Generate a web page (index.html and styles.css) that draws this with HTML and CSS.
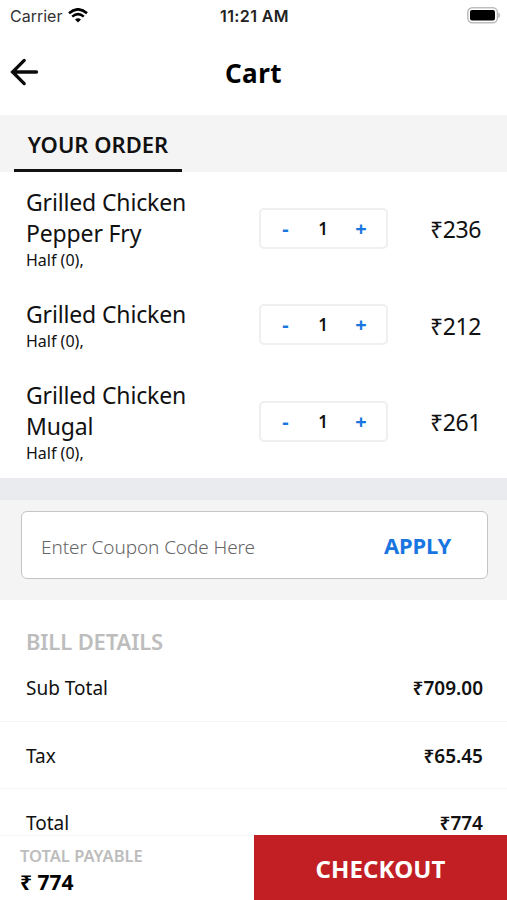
FILE: index.html
```html
<!DOCTYPE html>
<html lang="en">
<head>
  <meta charset="UTF-8" />
  <meta name="viewport" content="width=device-width, initial-scale=1.0" />
  <title>Cart</title>
  <link rel="stylesheet" href="styles.css">
</head>
<body>
  <div class="screen">
    <div class="status-bar">
      <div class="carrier">
        <span>Carrier</span>
        <svg class="wifi" width="20" height="15" viewBox="0 0 20 15">
          <path d="M1 5.2 Q10 -2.6 19 5.2" fill="none" stroke="#000" stroke-width="2.6" />
          <path d="M4.2 8.6 Q10 3.6 15.8 8.6" fill="none" stroke="#000" stroke-width="2.5" />
          <path d="M7 11.5 Q10 8.9 13 11.5 L10 14.6 Z" fill="#000" />
        </svg>
      </div>
      <div class="time">11:21 AM</div>
      <svg class="battery" width="34" height="17" viewBox="0 0 34 17">
        <rect x="0.8" y="0.8" width="29.6" height="15" rx="4.5" fill="#fff" stroke="#bdbdbd" stroke-width="1.5" />
        <rect x="3" y="3" width="25" height="10.6" rx="2" fill="#000" />
        <path d="M31.8 6 Q33.6 8.3 31.8 10.6 Z" fill="#bdbdbd" stroke="#bdbdbd" />
      </svg>
    </div>

    <div class="header">
      <svg class="back" width="29" height="28" viewBox="0 0 29 28">
        <path d="M26.5 14 H2.5 M14.2 2.4 L2.6 14 L14.2 25.6" fill="none" stroke="#0b0b0b" stroke-width="3.3" stroke-linecap="round" />
      </svg>
      <h1>Cart</h1>
    </div>

    <div class="tabs">
      <div class="tab">YOUR ORDER</div>
    </div>

    <div class="items">
      <div class="item">
        <div class="item-info">
          <div class="item-name">Grilled Chicken Pepper Fry</div>
          <div class="item-option">Half (0),</div>
        </div>
        <div class="counter">
          <span class="minus">-</span>
          <span class="count">1</span>
          <span class="plus">+</span>
        </div>
        <div class="price">₹236</div>
      </div>
      <div class="item">
        <div class="item-info">
          <div class="item-name">Grilled Chicken</div>
          <div class="item-option">Half (0),</div>
        </div>
        <div class="counter">
          <span class="minus">-</span>
          <span class="count">1</span>
          <span class="plus">+</span>
        </div>
        <div class="price">₹212</div>
      </div>
      <div class="item">
        <div class="item-info">
          <div class="item-name">Grilled Chicken Mugal</div>
          <div class="item-option">Half (0),</div>
        </div>
        <div class="counter">
          <span class="minus">-</span>
          <span class="count">1</span>
          <span class="plus">+</span>
        </div>
        <div class="price">₹261</div>
      </div>
    </div>

    <div class="divider"></div>

    <div class="coupon">
      <div class="coupon-box">
        <input type="text" class="coupon-input" placeholder="Enter Coupon Code Here" />
        <button class="apply-btn">APPLY</button>
      </div>
    </div>

    <div class="bill">
      <h2>BILL DETAILS</h2>
      <div class="bill-row first">
        <span>Sub Total</span>
        <span class="amount">₹709.00</span>
      </div>
      <div class="bill-row">
        <span>Tax</span>
        <span class="amount">₹65.45</span>
      </div>
      <div class="bill-row last">
        <span>Total</span>
        <span class="amount">₹774</span>
      </div>
    </div>

    <div class="footer">
      <div class="payable">
        <div class="payable-label">TOTAL PAYABLE</div>
        <div class="payable-amount">₹ 774</div>
      </div>
      <button class="checkout-btn">CHECKOUT</button>
    </div>
  </div>
</body>
</html>
```

FILE: styles.css
```css
* {
  box-sizing: border-box;
}

body {
  margin: 0;
  font-family: "Noto Sans", "Open Sans", sans-serif;
  background-color: #fff;
  color: #111;
}

.screen {
  height: 900px;
  display: flex;
  flex-direction: column;
  overflow: hidden;
}

/* Status bar */
.status-bar {
  flex: none;
  height: 31px;
  padding: 0 6px 0 8px;
  display: grid;
  grid-template-columns: 1fr auto 1fr;
  align-items: center;
  font-family: Inter, sans-serif;
  font-size: 16px;
}

.carrier {
  padding-left: 2px;
  display: flex;
  align-items: center;
  gap: 6px;
  color: #333;
}

.time {
  font-weight: 600;
  letter-spacing: 0.4px;
  color: #222;
}

.battery {
  justify-self: end;
}

/* Header */
.header {
  flex: none;
  height: 84px;
  padding: 0 10px 2px;
  display: grid;
  grid-template-columns: 29px 1fr 29px;
  align-items: center;
}

.header h1 {
  margin: 0;
  padding-top: 2px;
  text-align: center;
  font-size: 26px;
  font-weight: 700;
  letter-spacing: 0.5px;
  color: #000;
}

/* Tabs */
.tabs {
  flex: none;
  height: 57px;
  padding-left: 14px;
  background-color: #f4f4f4;
  display: flex;
}

.tab {
  width: 168px;
  border-bottom: 3px solid #111;
  text-align: center;
  font-size: 22px;
  font-weight: 600;
  line-height: 59px;
}

/* Order items */
.items {
  flex: none;
  padding-top: 1px;
}

.item {
  padding: 14px 26px;
  display: flex;
  align-items: center;
}

.item-info {
  width: 233px;
  padding-right: 50px;
}

.item-name {
  font-size: 23px;
  line-height: 31px;
  letter-spacing: -0.15px;
}

.item-option {
  font-size: 16px;
  line-height: 22px;
}

.counter {
  width: 129px;
  height: 41px;
  margin-bottom: 2px;
  border: 2px solid #efefef;
  border-radius: 5px;
  display: grid;
  grid-template-columns: 49px 26px 50px;
  align-items: center;
  text-align: center;
  font-size: 17px;
  font-weight: 600;
}

.minus,
.plus {
  font-size: 20px;
  font-weight: 700;
  color: #1976e0;
}

.price {
  margin-left: auto;
  font-size: 23px;
  letter-spacing: -0.4px;
}

.divider {
  flex: none;
  height: 22px;
  background-color: #e9ebee;
}

/* Coupon */
.coupon {
  flex: none;
  height: 100px;
  padding: 11px 19px 21px 21px;
  background-color: #f4f4f4;
}

.coupon-box {
  height: 68px;
  padding: 0 36px 0 19px;
  background-color: #fff;
  border: 1.5px solid #c4c4c4;
  border-radius: 6px;
  display: flex;
  align-items: center;
}

.coupon-input {
  flex: 1;
  min-width: 0;
  padding: 3px 0 0;
  border: none;
  outline: none;
  background: none;
  font-family: inherit;
  font-size: 19px;
  font-weight: 300;
  letter-spacing: -0.1px;
}

.coupon-input::placeholder {
  color: #666;
}

.apply-btn {
  padding: 0;
  border: none;
  background: none;
  font-family: inherit;
  font-size: 22px;
  font-weight: 700;
  letter-spacing: -0.2px;
  color: #1976e0;
}

/* Bill */
.bill {
  flex: 1;
  min-height: 0;
  overflow: hidden;
}

.bill h2 {
  margin: 0;
  padding: 26px 26px 0;
  font-size: 22px;
  font-weight: 600;
  line-height: 30px;
  letter-spacing: -0.15px;
  color: #bdbdbd;
}

.bill-row {
  height: 67px;
  padding: 1px 24px 0 26px;
  border-bottom: 1px solid #f4f4f4;
  display: flex;
  justify-content: space-between;
  align-items: center;
  font-size: 19px;
}

.bill-row.first {
  height: 66px;
  padding-top: 0;
  padding-bottom: 1px;
}

.bill-row.last {
  padding-top: 2px;
}

.amount {
  font-weight: 600;
}

/* Footer */
.footer {
  flex: none;
  height: 65px;
  display: grid;
  grid-template-columns: 254px 1fr;
}

.payable {
  padding: 9px 20px 0;
  border-top: 1px solid #f4f4f4;
}

.payable-label {
  font-size: 16.5px;
  font-weight: 600;
  line-height: 22px;
  color: #bdbdbd;
}

.payable-amount {
  font-size: 21px;
  font-weight: 700;
  line-height: 30px;
  color: #000;
}

.checkout-btn {
  padding: 2px 0 0;
  border: none;
  background-color: #c21f24;
  font-family: inherit;
  font-size: 24px;
  font-weight: 700;
  letter-spacing: 0.1px;
  color: #fff;
}
```
